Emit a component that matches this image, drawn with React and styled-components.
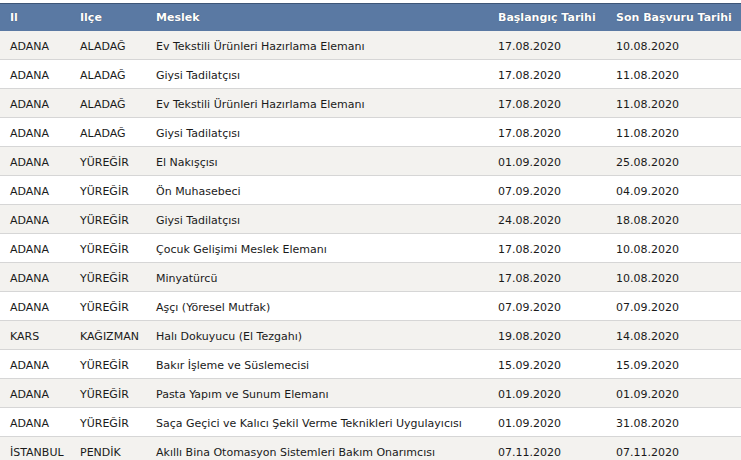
import React from "react";
import styled, { createGlobalStyle } from "styled-components";

const GlobalStyle = createGlobalStyle`
  html, body {
    margin: 0;
    padding: 0;
    background: #ffffff;
  }
`;

const Page = styled.div`
  padding-top: 3px;
  width: 741px;
`;

const Table = styled.table`
  width: 741px;
  border-collapse: collapse;
  table-layout: fixed;
  font-family: "DejaVu Sans", Verdana, sans-serif;
  font-size: 11px;
  color: #1a1a1a;
`;

const HeadRow = styled.tr`
  background: #5a79a3;
  border-top: 1px solid #3e5677;
`;

const HeadCell = styled.th`
  height: 27px;
  padding: 0 0 0 10px;
  text-align: left;
  font-weight: bold;
  color: #ffffff;
  text-shadow: 0 0 1px rgba(0, 0, 0, 0.45);
  white-space: nowrap;
`;

const Row = styled.tr`
  background: ${(p) => (p.$odd ? "#f3f2ef" : "#ffffff")};
  border-bottom: 1px solid #d6d6d6;
`;

const Cell = styled.td`
  height: 26px;
  padding: 2px 0 0 10px;
  white-space: nowrap;
  overflow: hidden;
`;

const columns = [
  { label: "Il", width: 70 },
  { label: "Ilçe", width: 76 },
  { label: "Meslek", width: 342 },
  { label: "Başlangıç Tarihi", width: 118 },
  { label: "Son Başvuru Tarihi", width: 135 },
];

const rows = [
  ["ADANA", "ALADAĞ", "Ev Tekstili Ürünleri Hazırlama Elemanı", "17.08.2020", "10.08.2020"],
  ["ADANA", "ALADAĞ", "Giysi Tadilatçısı", "17.08.2020", "11.08.2020"],
  ["ADANA", "ALADAĞ", "Ev Tekstili Ürünleri Hazırlama Elemanı", "17.08.2020", "11.08.2020"],
  ["ADANA", "ALADAĞ", "Giysi Tadilatçısı", "17.08.2020", "11.08.2020"],
  ["ADANA", "YÜREĞİR", "El Nakışçısı", "01.09.2020", "25.08.2020"],
  ["ADANA", "YÜREĞİR", "Ön Muhasebeci", "07.09.2020", "04.09.2020"],
  ["ADANA", "YÜREĞİR", "Giysi Tadilatçısı", "24.08.2020", "18.08.2020"],
  ["ADANA", "YÜREĞİR", "Çocuk Gelişimi Meslek Elemanı", "17.08.2020", "10.08.2020"],
  ["ADANA", "YÜREĞİR", "Minyatürcü", "17.08.2020", "10.08.2020"],
  ["ADANA", "YÜREĞİR", "Aşçı (Yöresel Mutfak)", "07.09.2020", "07.09.2020"],
  ["KARS", "KAĞIZMAN", "Halı Dokuyucu (El Tezgahı)", "19.08.2020", "14.08.2020"],
  ["ADANA", "YÜREĞİR", "Bakır İşleme ve Süslemecisi", "15.09.2020", "15.09.2020"],
  ["ADANA", "YÜREĞİR", "Pasta Yapım ve Sunum Elemanı", "01.09.2020", "01.09.2020"],
  ["ADANA", "YÜREĞİR", "Saça Geçici ve Kalıcı Şekil Verme Teknikleri Uygulayıcısı", "01.09.2020", "31.08.2020"],
  ["İSTANBUL", "PENDİK", "Akıllı Bina Otomasyon Sistemleri Bakım Onarımcısı", "07.11.2020", "07.11.2020"],
];

export default function App() {
  return (
    <Page>
      <GlobalStyle />
      <Table>
        <colgroup>
          {columns.map((c) => (
            <col key={c.label} style={{ width: c.width }} />
          ))}
        </colgroup>
        <thead>
          <HeadRow>
            {columns.map((c) => (
              <HeadCell key={c.label}>{c.label}</HeadCell>
            ))}
          </HeadRow>
        </thead>
        <tbody>
          {rows.map((r, i) => (
            <Row key={i} $odd={i % 2 === 0}>
              {r.map((v, j) => (
                <Cell key={j}>{v}</Cell>
              ))}
            </Row>
          ))}
        </tbody>
      </Table>
    </Page>
  );
}
